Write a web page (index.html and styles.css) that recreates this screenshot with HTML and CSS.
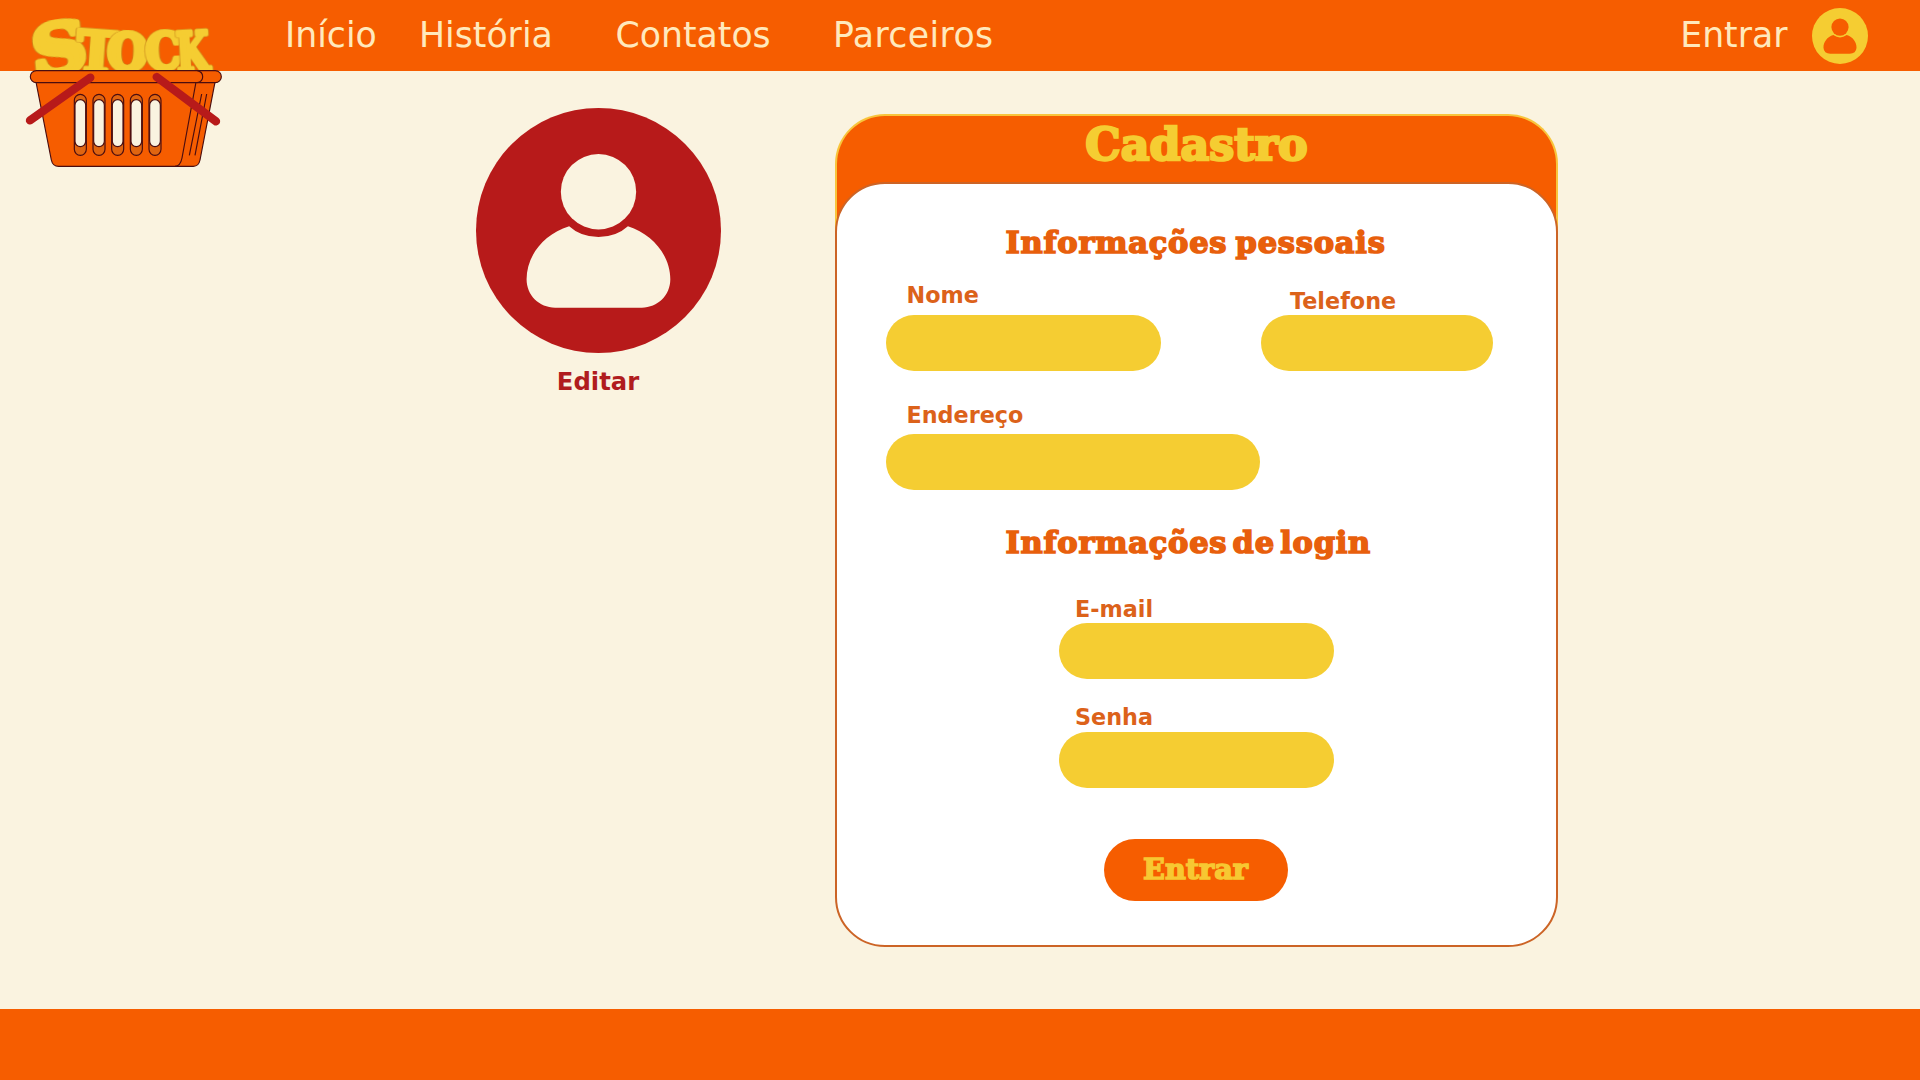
FILE: index.html
```html
<!DOCTYPE html>
<html lang="pt-BR">
<head>
<meta charset="utf-8">
<title>Stock - Cadastro</title>
<link rel="stylesheet" href="styles.css">
</head>
<body>
<header class="topbar">
  <svg class="logo" viewBox="0 0 780 570" role="img" aria-label="Stock">
    <defs>
      <clipPath id="above-rim"><rect x="0" y="0" width="780" height="214"/></clipPath>
      <g id="slot">
        <rect x="0" y="283" width="36" height="183" rx="18" fill="#e06510" stroke="#4a0d10" stroke-width="3.500"/>
        <rect x="2" y="299" width="32" height="141" rx="16" fill="#faf3e0" stroke="#4a0d10" stroke-width="3.500"/>
      </g>
    </defs>
    <g class="logo-word" clip-path="url(#above-rim)">
      <text transform="translate(102 232) rotate(-9) skewX(-4) scale(1.12 1)" font-size="205" stroke-width="17">S</text>
      <text transform="translate(226 212) rotate(4) scale(.96 1)" font-size="170" stroke-width="13">T</text>
      <text transform="translate(320 208) rotate(2) scale(.86 .94)" font-size="162" stroke-width="16">O</text>
      <text transform="translate(438 209) rotate(-2) scale(.86 .96)" font-size="158" stroke-width="14">C</text>
      <text transform="translate(532 217) rotate(-3) scale(.69 1)" font-size="164" stroke-width="14">K</text>
    </g>
    <g fill="#f65d00" stroke="#4a0d10" stroke-width="3.500">
      <path d="M108 246 154 480Q158 499 176 499H580Q596 499 600 480L645 246Z"/>
      <path d="M588 246 546 474Q541 499 525 499" fill="none"/>
      <path d="M605 282 568 466M620 282 585 466" fill="none"/>
      <rect x="91" y="212" width="573" height="36" rx="18"/>
      <path d="M592 212Q608 216 608 230T592 248" fill="none"/>
    </g>
    <use href="#slot" x="223"/><use href="#slot" x="279"/><use href="#slot" x="335"/><use href="#slot" x="391"/><use href="#slot" x="447"/>
    <path d="M271 233 90 361M470 231 648 364" fill="none" stroke="#b71a1a" stroke-width="25" stroke-linecap="round"/>
  </svg>
  <nav class="nav">
    <a>Início</a><a>História</a><a>Contatos</a><a class="partners">Parceiros</a>
  </nav>
  <div class="account">
    <a>Entrar</a>
    <svg class="account-icon" viewBox="0 0 244 244">
      <circle cx="122" cy="122" r="122" fill="#f5cd32"/>
      <circle cx="122" cy="83" r="37.5" fill="#f65d00"/>
      <path d="M93 118C66 126 50 149 50 173Q52 199 80 199H164Q192 199 194 173C194 149 178 126 151 118Q122 138 93 118Z" fill="#f65d00"/>
    </svg>
  </div>
</header>
<main class="content">
  <section class="profile">
    <svg class="avatar" viewBox="0 0 244.6 244.6">
      <circle cx="122.3" cy="122.3" r="122.3" fill="#b71a1a"/>
      <circle cx="122.3" cy="83.6" r="37.6" fill="#faf3e0"/>
      <path d="M93 118C67 126 50.500 148 50.500 171C50.500 187 63 199.300 79 199.300H165.500C181.500 199.300 194 187 194 171C194 148 177 126 151.700 118Q140 128.700 122.300 128.700T93 118Z" fill="#faf3e0"/>
    </svg>
    <a class="edit">Editar</a>
  </section>
  <form class="card">
    <div class="card-head"><h1>Cadastro</h1></div>
    <div class="card-body">
      <h2 class="personal">Informações pessoais</h2>
      <div class="row">
        <label class="field name"><span>Nome</span><input type="text"></label>
        <label class="field phone"><span>Telefone</span><input type="tel"></label>
      </div>
      <label class="field address"><span>Endereço</span><input type="text"></label>
      <h2 class="login">Informações de login</h2>
      <label class="field email"><span>E-mail</span><input type="email"></label>
      <label class="field password"><span>Senha</span><input type="password"></label>
      <button type="button">Entrar</button>
    </div>
  </form>
</main>
<footer class="footer"></footer>
</body>
</html>
```
FILE: styles.css
```css
* { box-sizing: border-box; }
body {
  margin: 0;
  height: 1080px;
  display: flex;
  flex-direction: column;
  overflow: hidden;
  background: #faf3e0;
  font-family: "DejaVu Sans", sans-serif;
}
h1, h2, button { font-family: "DejaVu Serif", serif; font-weight: 700; }
h1, h2 { margin: 0; white-space: nowrap; }

.topbar {
  position: relative;
  flex: none;
  height: 71px;
  padding: 0 52px 0 285px;
  display: flex;
  justify-content: space-between;
  background: #f65d00;
  color: #ffe9bd;
  font-size: 34.7px;
  line-height: 70px;
}
.logo { position: absolute; left: 0; top: 0; width: 260px; height: 190px; }
.logo-word {
  font-family: "DejaVu Serif", serif;
  font-weight: 700;
  fill: #f5cd32;
  stroke: #f5cd32;
  stroke-linejoin: round;
}
.logo-word text { filter: drop-shadow(2px 0 0 #c98a1c) drop-shadow(-2px 0 0 #c98a1c); }
.nav { display: grid; grid-template-columns: 134px 196.500px 217.500px auto; }
.partners { letter-spacing: .4px; }
.account { display: flex; align-items: flex-start; gap: 24.500px; }
.account-icon { width: 56px; height: 56px; margin-top: 8px; }

.content { flex: 1; display: flex; align-items: flex-start; padding-left: 475.500px; }
.profile { width: 245px; padding-top: 37px; display: flex; flex-direction: column; align-items: center; }
.avatar { width: 245px; height: 245px; }
.edit { margin-top: 14px; font-size: 24.3px; line-height: 30px; font-weight: 700; color: #b01c1e; }

.card { width: 723px; margin: 43px 0 0 114.500px; }
.card-head {
  height: 120px;
  margin-bottom: -52px;
  border: 2px solid #f8c53c;
  border-bottom: 0;
  border-radius: 50px 50px 0 0;
  background: #f65d00;
  text-align: center;
}
h1 { font-size: 44.400px; line-height: 56px; color: #f5cd32; -webkit-text-stroke: 2.500px #f5cd32; }
.card-body {
  position: relative;
  height: 765px;
  padding: 38px 49px 0;
  display: flex;
  flex-direction: column;
  border: 2px solid #cc6426;
  border-radius: 50px;
  background: #fff;
}
h2 {
  margin-left: 119.500px;
  font-size: 30.5px;
  line-height: 41px;
  letter-spacing: .75px;
  word-spacing: -3px;
  color: #e85f0c;
  -webkit-text-stroke: 1.6px #e85f0c;
}
.row { margin-top: 19px; display: flex; align-items: flex-end; gap: 100px; }
.field { display: flex; flex-direction: column; }
.field span { padding-left: 20.500px; font-size: 22.3px; line-height: 26px; font-weight: 700; color: #dc621a; }
.field input { width: 275px; height: 56px; margin: 0; padding: 0 24px; border: 0; border-radius: 28px; background: #f5cd32; }
.name { gap: 7px; }
.phone { gap: 1px; }
.phone span { padding-left: 29px; }
.phone input { width: 232px; }
.address { margin-top: 31px; gap: 6px; }
.address input { width: 374px; }
.login { margin-top: 31.500px; word-spacing: -6px; }
.email { margin: 33.500px 0 0 173px; gap: 1px; }
.password { margin: 25px 0 0 173px; gap: 2px; }
.email span, .password span { padding-left: 16px; }
button {
  width: 184px;
  height: 62px;
  margin: 51px 0 0 218px;
  padding: 0 1px 3px 0;
  border: 0;
  border-radius: 31px;
  background: #f65d00;
  color: #f7c832;
  font-size: 28.7px;
  -webkit-text-stroke: 1.500px #f7c832;
}
.footer { flex: none; height: 71px; background: #f65d00; }
```
